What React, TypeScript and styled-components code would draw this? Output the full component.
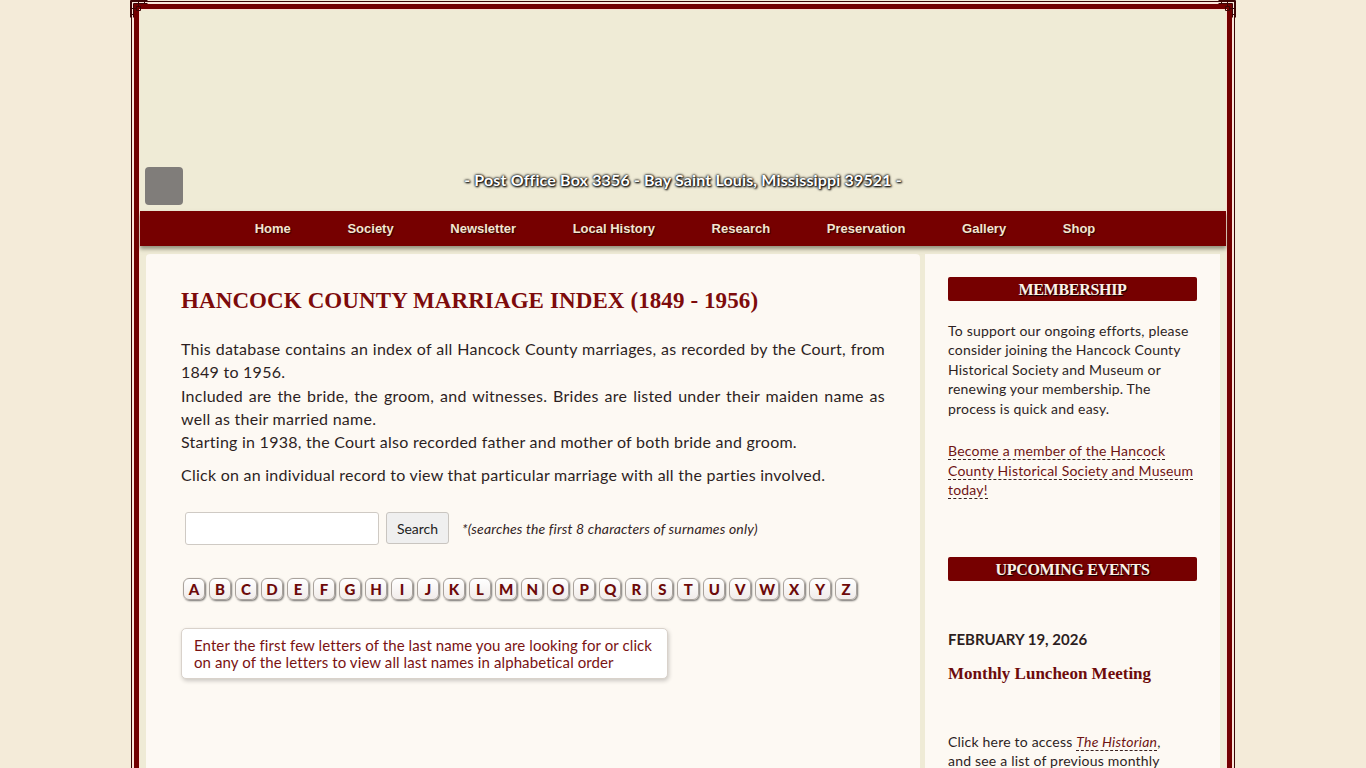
import React from 'react';
import styled, { createGlobalStyle } from 'styled-components';

const GlobalStyle = createGlobalStyle`
    body {
        margin: 0;
        background: #f4ebd9;
        font-family: Lato, 'Open Sans', sans-serif;
        color: #2d1f1f;
    }
`;

const SFrame = styled.div`
    position: relative;
    width: 1104px;
    box-sizing: border-box;
    margin: 1px auto 0;
    border: 1px solid #3c0505;
    padding: 2px;
    background: #fbe6da;
`;

const SInner = styled.div`
    border: 5px solid #730000;
    padding: 1px;
    background: #fbe0d2;
`;

const SCorner = styled.svg<{ $right?: boolean }>`
    position: absolute;
    top: -2px;
    ${({ $right }) => ($right ? 'right: -2px; transform: scaleX(-1);' : 'left: -2px;')}
    width: 18px;
    height: 18px;
`;

const SHeader = styled.header`
    height: 201px;
    box-sizing: border-box;
    background: #efebd6;
    display: grid;
    grid-template-columns: 38px 1fr 38px;
    align-items: end;
    padding: 0 5px 6px;
`;

const SLogoBox = styled.div`
    width: 38px;
    height: 38px;
    border-radius: 4px;
    background: #807d7a;
`;

const SAddress = styled.div`
    margin-bottom: 15px;
    text-align: center;
    font-weight: bold;
    font-size: 16px;
    letter-spacing: 0.15px;
    line-height: 20px;
    color: #fff;
    text-shadow: 0 0 3px #000, 0 0 2px #000, 1px 1px 2px #000;
`;

const SNav = styled.nav`
    position: relative;
    z-index: 1;
    height: 35px;
    display: flex;
    align-items: center;
    justify-content: center;
    padding-right: 16px;
    background: #760000;
    box-shadow: 0 3px 4px rgba(70, 70, 50, 0.55);
`;

const SNavLink = styled.a`
    padding: 0 28.3px;
    font: bold 13px 'Liberation Sans', Arial, sans-serif;
    color: #f4e5cf;
    text-shadow: 1px 1px 1px #2a0000;
    text-decoration: none;
    cursor: pointer;
`;

const SBody = styled.div`
    display: grid;
    grid-template-columns: 774px 295px;
    gap: 5px;
    padding: 8px 6px 0;
    background: #efebd6;
    min-height: 560px;
`;

const SMain = styled.main`
    background: #fdf9f3;
    padding: 34px 35px 40px;
    border-radius: 4px 4px 0 0;
`;

const STitle = styled.h1`
    margin: 0 0 23px;
    font: bold 23px/26px 'Liberation Serif', 'Times New Roman', serif;
    letter-spacing: 0.1px;
    color: #7d0b0b;
`;

const SText = styled.p`
    margin: 0 0 10px;
    font-size: 16px;
    letter-spacing: 0.25px;
    line-height: 23.25px;
    text-align: justify;
`;

const SSearchRow = styled.form`
    display: flex;
    align-items: center;
    gap: 7px;
    margin-top: 25px;
    padding-left: 4px;
`;

const SInput = styled.input`
    width: 194px;
    height: 33px;
    box-sizing: border-box;
    border: 1px solid #cfcac4;
    border-radius: 3px;
    background: #fff;
`;

const SButton = styled.button`
    width: 63px;
    height: 32px;
    border: 1px solid #c9c5c0;
    border-radius: 3px;
    background: #efefef;
    font: 14px Lato, sans-serif;
    color: #222;
`;

const SNote = styled.span`
    margin-left: 6px;
    font-size: 14px;
    letter-spacing: 0.15px;
    font-style: italic;
    color: #332424;
`;

const SLetters = styled.div`
    display: flex;
    gap: 4px;
    margin-top: 33px;
    padding-left: 2px;
`;

const SLetter = styled.a`
    min-width: 22px;
    height: 22px;
    box-sizing: border-box;
    padding: 0 3px;
    display: inline-flex;
    align-items: center;
    justify-content: center;
    border: 1px solid #a9a29c;
    border-radius: 6px;
    background: linear-gradient(#fff, #f1ecea);
    box-shadow: 1px 1px 2px rgba(0, 0, 0, 0.55);
    font-weight: 900;
    font-size: 15px;
    color: #6d0a0a;
    cursor: pointer;
`;

const SInfo = styled.div`
    width: 487px;
    box-sizing: border-box;
    margin-top: 28px;
    padding: 8px 12px 7px;
    border: 1px solid #d9d2cb;
    border-radius: 5px;
    background: #fff;
    box-shadow: 1px 2px 4px rgba(0, 0, 0, 0.2);
    font-size: 15px;
    letter-spacing: 0.1px;
    line-height: 17px;
    color: #7a1212;
`;

const SSide = styled.aside`
    background: #fdf9f3;
    padding: 23px 23px 40px;
`;

const SSideTitle = styled.h2<{ $gap?: number }>`
    margin: ${({ $gap }) => $gap ?? 0}px 0 0;
    height: 24px;
    border-radius: 2px;
    background: #760000;
    font: bold 16px/25px 'Liberation Serif', 'Times New Roman', serif;
    letter-spacing: -0.3px;
    text-align: center;
    color: #fdf1e6;
    text-shadow: 1px 1px 1px #000;
`;

const SSideText = styled.p<{ $top?: number; $narrow?: boolean }>`
    margin: ${({ $top }) => $top ?? 19.5}px 0 0;
    padding-right: ${({ $narrow }) => ($narrow ? '10px' : '0')};
    font-size: 14px;
    letter-spacing: 0.2px;
    line-height: 19.5px;
`;

const SLink = styled.a`
    color: #6f1414;
    text-decoration: none;
    border-bottom: 1px dashed #3a2020;
    cursor: pointer;
`;

const SDate = styled.div`
    margin-top: 48px;
    font-weight: bold;
    font-size: 15px;
    line-height: 20px;
`;

const SEventTitle = styled.h3`
    margin: 15px 0 0;
    font: bold 17px/20px 'Liberation Serif', 'Times New Roman', serif;
    color: #6d0b0b;
`;

const navItems = ['Home', 'Society', 'Newsletter', 'Local History', 'Research', 'Preservation', 'Gallery', 'Shop'];
const letters = 'ABCDEFGHIJKLMNOPQRSTUVWXYZ'.split('');

const Corner = ({ right }: { right?: boolean }) => (
    <SCorner $right={right} viewBox="0 0 18 18">
        <path d="M0.5 0.5h17M0.5 0.5v17M3.5 3.5h14M3.5 3.5v14M6.5 6.5h4v4h-4z" stroke="#3c0505" fill="none" />
        <path d="M8.5 0.5v6M14.5 0.5v3M0.5 8.5h6M0.5 14.5h3" stroke="#3c0505" fill="none" />
    </SCorner>
);

export default function App() {
    return (
        <>
            <GlobalStyle />
            <SFrame>
                <Corner />
                <Corner right />
                <SInner>
                    <SHeader>
                        <SLogoBox />
                        <SAddress>- Post Office Box 3356 - Bay Saint Louis, Mississippi 39521 -</SAddress>
                    </SHeader>
                    <SNav>
                        {navItems.map((item) => (
                            <SNavLink key={item}>{item}</SNavLink>
                        ))}
                    </SNav>
                    <SBody>
                        <SMain>
                            <STitle>HANCOCK COUNTY MARRIAGE INDEX (1849 - 1956)</STitle>
                            <SText>
                                This database contains an index of all Hancock County marriages, as recorded by the
                                Court, from 1849 to 1956.
                                <br />
                                Included are the bride, the groom, and witnesses. Brides are listed under their maiden
                                name as well as their married name.
                                <br />
                                Starting in 1938, the Court also recorded father and mother of both bride and groom.
                            </SText>
                            <SText>Click on an individual record to view that particular marriage with all the parties involved.</SText>
                            <SSearchRow onSubmit={(e) => e.preventDefault()}>
                                <SInput type="text" />
                                <SButton type="submit">Search</SButton>
                                <SNote>*(searches the first 8 characters of surnames only)</SNote>
                            </SSearchRow>
                            <SLetters>
                                {letters.map((l) => (
                                    <SLetter key={l}>{l}</SLetter>
                                ))}
                            </SLetters>
                            <SInfo>
                                Enter the first few letters of the last name you are looking for or click on any of the
                                letters to view all last names in alphabetical order
                            </SInfo>
                        </SMain>
                        <SSide>
                            <SSideTitle>MEMBERSHIP</SSideTitle>
                            <SSideText>
                                To support our ongoing efforts, please consider joining the Hancock County Historical
                                Society and Museum or renewing your membership. The process is quick and easy.
                            </SSideText>
                            <SSideText $top={23}>
                                <SLink>Become a member of the Hancock County Historical Society and Museum today!</SLink>
                            </SSideText>
                            <SSideTitle $gap={57}>UPCOMING EVENTS</SSideTitle>
                            <SDate>FEBRUARY 19, 2026</SDate>
                            <SEventTitle>Monthly Luncheon Meeting</SEventTitle>
                            <SSideText $top={48} $narrow>
                                Click here to access{' '}
                                <SLink>
                                    <i>The Historian</i>
                                </SLink>
                                , and see a list of previous monthly meetings and speakers.
                            </SSideText>
                        </SSide>
                    </SBody>
                </SInner>
            </SFrame>
        </>
    );
}
